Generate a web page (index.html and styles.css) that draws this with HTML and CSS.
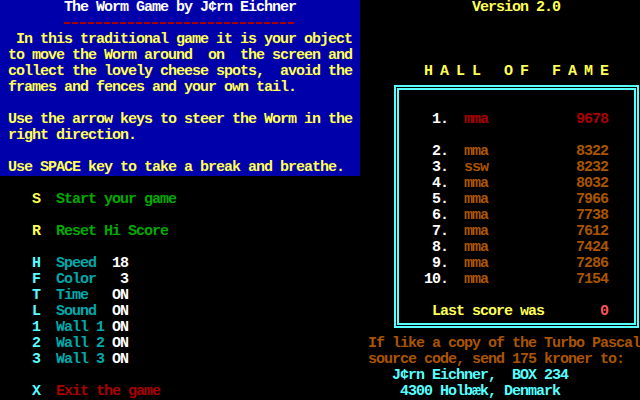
FILE: index.html
```html
<!DOCTYPE html>
<html>
<head>
<meta charset="utf-8">
<link rel="stylesheet" href="styles.css">
</head>
<body>
<div class="screen">
  <div class="left">
    <div class="intro">
      <div class="line title">The Worm Game by J¢rn Eichner</div>
      <div class="rule"></div>
      <div class="para">
        <div class="line"> In this traditional game it is your object</div>
        <div class="line">to move the Worm around  on  the screen and</div>
        <div class="line">collect the lovely cheese spots,  avoid the</div>
        <div class="line">frames and fences and your own tail.</div>
        <div class="line"></div>
        <div class="line">Use the arrow keys to steer the Worm in the</div>
        <div class="line">right direction.</div>
        <div class="line"></div>
        <div class="line">Use SPACE key to take a break and breathe.</div>
      </div>
    </div>
    <div class="menu">
      <div class="k hot">S</div><div class="act go">Start your game</div>
      <div class="gap"></div>
      <div class="k hot">R</div><div class="act go">Reset Hi Score</div>
      <div class="gap"></div>
      <div class="k">H</div><div class="lab">Speed</div><div class="val">18</div>
      <div class="k">F</div><div class="lab">Color</div><div class="val">3</div>
      <div class="k">T</div><div class="lab">Time</div><div class="val">ON</div>
      <div class="k">L</div><div class="lab">Sound</div><div class="val">ON</div>
      <div class="k">1</div><div class="lab">Wall 1</div><div class="val">ON</div>
      <div class="k">2</div><div class="lab">Wall 2</div><div class="val">ON</div>
      <div class="k">3</div><div class="lab">Wall 3</div><div class="val">ON</div>
      <div class="gap"></div>
      <div class="k">X</div><div class="act quit">Exit the game</div>
    </div>
  </div>
  <div class="right">
    <div class="line version">Version 2.0</div>
    <div class="line hof-title">H A L L   O F   F A M E</div>
    <div class="frame">
      <div class="frame-inner">
        <div class="scores">
          <div class="num">1.</div><div class="name top">mma</div><div class="pts top">9678</div>
          <div class="gap"></div>
          <div class="num">2.</div><div class="name">mma</div><div class="pts">8322</div>
          <div class="num">3.</div><div class="name">ssw</div><div class="pts">8232</div>
          <div class="num">4.</div><div class="name">mma</div><div class="pts">8032</div>
          <div class="num">5.</div><div class="name">mma</div><div class="pts">7966</div>
          <div class="num">6.</div><div class="name">mma</div><div class="pts">7738</div>
          <div class="num">7.</div><div class="name">mma</div><div class="pts">7612</div>
          <div class="num">8.</div><div class="name">mma</div><div class="pts">7424</div>
          <div class="num">9.</div><div class="name">mma</div><div class="pts">7286</div>
          <div class="num">10.</div><div class="name">mma</div><div class="pts">7154</div>
        </div>
        <div class="last"><span class="last-label">Last score was</span><span class="last-val">0</span></div>
      </div>
    </div>
    <div class="offer">
      <div class="line note">If like a copy of the Turbo Pascal</div>
      <div class="line note">source code, send 175 kroner to:</div>
      <div class="line addr a1">J¢rn Eichner,  BOX 234</div>
      <div class="line addr a2">4300 Holbæk, Denmark</div>
    </div>
  </div>
</div>
</body>
</html>
```
FILE: styles.css
```css
html, body {
  margin: 0;
  padding: 0;
  background: #000;
}

.screen {
  display: flex;
  width: 640px;
  height: 400px;
  overflow: hidden;
  background: #000;
  font-family: "Liberation Mono", monospace;
  font-weight: bold;
  font-size: 15px;
  line-height: 16px;
  letter-spacing: -1px;
}

.line,
.menu > div,
.scores > div,
.last > span {
  white-space: pre;
}

.line {
  height: 16px;
}

/* ---------- left column ---------- */
.left {
  width: 360px;
  flex: none;
  display: flex;
  flex-direction: column;
}

.intro {
  height: 176px;
  background: #0000AA;
  color: #FFFF55;
}

.title {
  color: #FFFFFF;
  padding-left: 64px;
}

.rule {
  height: 16px;
  padding: 6px 0 0 64px;
  box-sizing: border-box;
}

.rule::before {
  content: "";
  display: block;
  width: 232px;
  height: 2px;
  background: repeating-linear-gradient(90deg, #AA0000 0 6px, transparent 6px 8px);
}

.para {
  padding-left: 8px;
}

.menu {
  padding: 16px 0 0 32px;
  display: grid;
  grid-template-columns: 24px 56px 16px;
  grid-auto-rows: 16px;
}

.menu .gap,
.scores .gap {
  grid-column: 1 / -1;
}

.k {
  color: #55FFFF;
}

.k.hot {
  color: #FFFF55;
}

.act {
  grid-column: 2 / -1;
}

.go {
  color: #00AA00;
}

.quit {
  color: #AA0000;
}

.lab {
  color: #00AAAA;
}

.val {
  color: #FFFFFF;
  text-align: right;
}

/* ---------- right column ---------- */
.right {
  width: 280px;
  flex: none;
  display: flex;
  flex-direction: column;
}

.version {
  color: #FFFF55;
  padding-left: 112px;
}

.hof-title {
  color: #FFFF55;
  margin-top: 48px;
  padding-left: 64px;
}

.frame {
  margin: 5px 0 8px 34px;
  width: 245px;
  height: 243px;
  box-sizing: border-box;
  border: 2px solid #55FFFF;
  padding: 1px;
}

.frame-inner {
  height: 100%;
  box-sizing: border-box;
  border: 2px solid #55FFFF;
  padding-top: 22px;
}

.scores {
  display: grid;
  grid-template-columns: 49px 96px 32px;
  column-gap: 16px;
  grid-auto-rows: 16px;
}

.num {
  color: #FFFFFF;
  text-align: right;
}

.name {
  color: #AA5500;
}

.pts {
  color: #AA5500;
  text-align: right;
}

.name.top,
.pts.top {
  color: #AA0000;
}

.last {
  display: flex;
  justify-content: space-between;
  width: 176px;
  height: 16px;
  margin: 16px 0 0 33px;
}

.last-label {
  color: #FFFF55;
}

.last-val {
  color: #FF5555;
}

.note {
  color: #AA5500;
  padding-left: 8px;
}

.addr {
  color: #55FFFF;
}

.a1 {
  padding-left: 32px;
}

.a2 {
  padding-left: 40px;
}
```
